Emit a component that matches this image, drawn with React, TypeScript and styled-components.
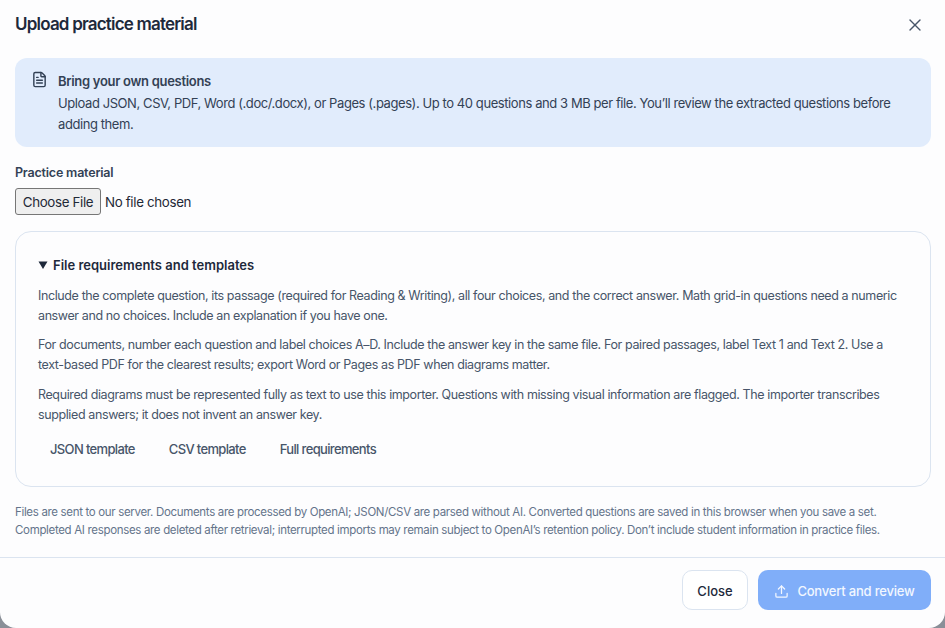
import React from "react";
import styled, { createGlobalStyle } from "styled-components";
import { FileText, X, Upload } from "lucide-react";

const Global = createGlobalStyle`
  html, body { margin: 0; padding: 0; background: #8a8f98; overflow: hidden; }
  #root { width: 945px; height: 628px; }
  * { box-sizing: border-box; }
`;

const Modal = styled.div`
  width: 945px;
  height: 628px;
  background: #fdfdfe;
  border-radius: 0 0 16px 16px;
  display: flex;
  flex-direction: column;
  font-family: Inter, "Liberation Sans", sans-serif;
  color: #1e293b;
  overflow: hidden;
`;

const Header = styled.header`
  height: 58px;
  padding: 0 15px;
  display: flex;
  align-items: center;
  justify-content: space-between;
`;

const Title = styled.h2`
  margin: 0 0 10px;
  font-size: 17px;
  line-height: 24px;
  font-weight: 600;
  letter-spacing: -0.8px;
  color: #1e293b;
`;

const CloseIcon = styled.button`
  border: 0;
  background: none;
  padding: 0;
  margin: 0 5px 9px 0;
  display: flex;
  color: #475569;
`;

const Body = styled.div`
  flex: 1;
  padding: 0 14px 0 15px;
`;

const Notice = styled.div`
  height: 89px;
  background: #e1ecfc;
  border-radius: 12px;
  padding: 13px 16px;
  display: flex;
  gap: 10px;
`;

const NoticeIcon = styled.div`
  color: #334155;
  flex: none;
  margin-top: 0;
`;

const NoticeText = styled.div`
  font-size: 13px;
  line-height: 21.5px;
  letter-spacing: -0.42px;
  color: #334155;
`;

const NoticeTitle = styled.div`
  font-weight: 600;
  letter-spacing: -0.3px;
`;

const FieldLabel = styled.label`
  display: block;
  margin-top: 16px;
  font-size: 12.5px;
  line-height: 20px;
  font-weight: 600;
  color: #334155;
  letter-spacing: -0.2px;
`;

const FileRow = styled.div`
  margin-top: 5px;
  height: 27px;
  display: flex;
  align-items: center;
  font-size: 13.33px;
  letter-spacing: -0.34px;
  color: #1f2937;
`;

const ChooseButton = styled.span`
  width: 86px;
  height: 27px;
  display: flex;
  align-items: center;
  justify-content: center;
  background: #efefef;
  border: 1px solid #767676;
  border-radius: 3px;
  margin-right: 4px;
  color: #1f2937;
`;

const Details = styled.section`
  margin-top: 16px;
  height: 256px;
  border: 1px solid #dbe4f0;
  border-radius: 16px;
  padding: 23px 22px 0;
`;

const Summary = styled.div`
  font-size: 13px;
  line-height: 20px;
  font-weight: 600;
  color: #1e293b;
  display: flex;
  align-items: center;
  gap: 5px;
  margin-bottom: 10.5px;
`;

const Arrow = styled.svg`
  width: 10px;
  height: 10px;
  fill: #1e293b;
`;

const Para = styled.p`
  margin: 9.5px 0 0;
  font-size: 12.5px;
  line-height: 20px;
  letter-spacing: -0.39px;
  color: #475569;
`;

const Links = styled.div`
  margin-top: 14px;
  display: flex;
  gap: 34px;
  padding-left: 12px;
`;

const TemplateLink = styled.a`
  font-size: 13px;
  line-height: 20px;
  font-weight: 500;
  letter-spacing: -0.65px;
  color: #475569;
`;

const Disclaimer = styled.p`
  margin: 16px 0 0;
  font-size: 11.5px;
  line-height: 18px;
  letter-spacing: -0.33px;
  color: #64748b;
`;

const Footer = styled.footer`
  height: 71px;
  border-top: 1px solid #dbe4f0;
  padding: 12px 14px 0 0;
  display: flex;
  justify-content: flex-end;
  gap: 10px;
`;

const SecondaryButton = styled.button`
  width: 66px;
  height: 40px;
  border: 1px solid #dbe4f0;
  border-radius: 10px;
  background: #fff;
  font: 500 13px Inter, "Liberation Sans", sans-serif;
  color: #1e293b;
  padding: 2px 0 0;
`;

const PrimaryButton = styled.button`
  width: 173px;
  height: 40px;
  border: 0;
  border-radius: 10px;
  background: #80aef9;
  color: #f2f7ff;
  font: 500 13px Inter, "Liberation Sans", sans-serif;
  letter-spacing: -0.2px;
  padding: 2px 0 0;
  display: flex;
  align-items: center;
  justify-content: center;
  gap: 8px;
`;

export default function App() {
  return (
    <>
      <Global />
      <Modal>
        <Header>
          <Title>Upload practice material</Title>
          <CloseIcon aria-label="Close"><X size={20} strokeWidth={1.6} /></CloseIcon>
        </Header>
        <Body>
          <Notice>
            <NoticeIcon><FileText size={17} /></NoticeIcon>
            <NoticeText>
              <NoticeTitle>Bring your own questions</NoticeTitle>
              Upload JSON, CSV, PDF, Word (.doc/.docx), or Pages (.pages). Up to 40 questions and 3 MB per file. You’ll review the extracted questions before adding them.
            </NoticeText>
          </Notice>
          <FieldLabel>Practice material</FieldLabel>
          <FileRow>
            <ChooseButton>Choose File</ChooseButton>
            No file chosen
          </FileRow>
          <Details>
            <Summary>
              <Arrow viewBox="0 0 10 10"><path d="M0.5 1.5h9L5 9z" /></Arrow>
              File requirements and templates
            </Summary>
            <Para>Include the complete question, its passage (required for Reading &amp; Writing), all four choices, and the correct answer. Math grid-in questions need a numeric answer and no choices. Include an explanation if you have one.</Para>
            <Para>For documents, number each question and label choices A–D. Include the answer key in the same file. For paired passages, label Text 1 and Text 2. Use a text-based PDF for the clearest results; export Word or Pages as PDF when diagrams matter.</Para>
            <Para>Required diagrams must be represented fully as text to use this importer. Questions with missing visual information are flagged. The importer transcribes supplied answers; it does not invent an answer key.</Para>
            <Links>
              <TemplateLink>JSON template</TemplateLink>
              <TemplateLink>CSV template</TemplateLink>
              <TemplateLink>Full requirements</TemplateLink>
            </Links>
          </Details>
          <Disclaimer>
            Files are sent to our server. Documents are processed by OpenAI; JSON/CSV are parsed without AI. Converted questions are saved in this browser when you save a set. Completed AI responses are deleted after retrieval; interrupted imports may remain subject to OpenAI’s retention policy. Don’t include student information in practice files.
          </Disclaimer>
        </Body>
        <Footer>
          <SecondaryButton>Close</SecondaryButton>
          <PrimaryButton><Upload size={15} />Convert and review</PrimaryButton>
        </Footer>
      </Modal>
    </>
  );
}
